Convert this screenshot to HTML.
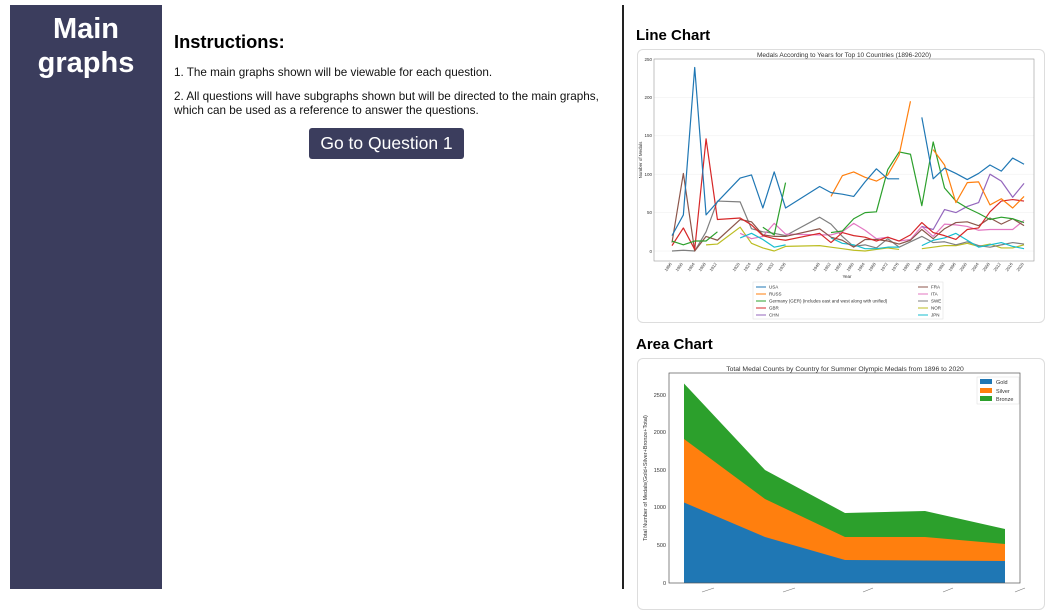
<!DOCTYPE html>
<html><head><meta charset="utf-8"><style>
html,body{margin:0;padding:0;width:1048px;height:595px;overflow:hidden;background:#fff;font-family:"Liberation Sans",sans-serif;}
.side{position:absolute;left:10px;top:5px;width:152px;height:584px;background:#3b3d5d;color:#fff;text-align:center;font-weight:bold;font-size:29px;line-height:34px;padding-top:7px;box-sizing:border-box;}
.vline{position:absolute;left:622px;top:5px;width:2px;height:584px;background:#222;}
h2{position:absolute;margin:0;font-size:18.3px;font-weight:bold;}
p{position:absolute;margin:0;font-size:11.7px;line-height:14px;color:#111;}
.btn{position:absolute;left:309px;top:128px;width:155px;height:31px;background:#3b3d5d;border-radius:3px;color:#fff;font-size:17.5px;text-align:center;line-height:31px;}
h3{position:absolute;margin:0;font-size:15px;font-weight:bold;}
.card{position:absolute;border:1px solid #ddd;border-radius:6px;background:#fff;}
svg{position:absolute;left:0;top:0;}
</style></head><body>
<div class="side">Main<br>graphs</div>
<div class="vline"></div>
<h2 style="left:174px;top:31px">Instructions:</h2>
<p style="left:174px;top:66px">1. The main graphs shown will be viewable for each question.</p>
<p style="left:174px;top:90px">2. All questions will have subgraphs shown but will be directed to the main graphs,<br>which can be used as a reference to answer the questions.</p>
<div class="btn">Go to Question 1</div>
<h3 style="left:636px;top:27px">Line Chart</h3>
<h3 style="left:636px;top:336px">Area Chart</h3>
<div class="card" style="left:637px;top:49px;width:406px;height:272px"></div>
<div class="card" style="left:637px;top:358px;width:406px;height:250px"></div>
<svg width="1048" height="595" font-family="Liberation Sans, sans-serif">
<g stroke="#eee" stroke-width="0.5">
<line x1="654" y1="251" x2="1034" y2="251"/><line x1="654" y1="212.6" x2="1034" y2="212.6"/><line x1="654" y1="174.2" x2="1034" y2="174.2"/><line x1="654" y1="135.8" x2="1034" y2="135.8"/><line x1="654" y1="97.4" x2="1034" y2="97.4"/><line x1="654" y1="59" x2="1034" y2="59"/>
</g>
<rect x="654" y="59" width="380" height="202" fill="none" stroke="#999" stroke-width="0.6"/>
<text x="844" y="57" font-size="6.5" text-anchor="middle" fill="#333">Medals According to Years for Top 10 Countries (1896-2020)</text>
<g font-size="4.5" fill="#333" text-anchor="end">
<text x="652" y="253">0</text><text x="652" y="214">50</text><text x="652" y="176">100</text><text x="652" y="137">150</text><text x="652" y="99">200</text><text x="652" y="61">250</text>
</g>
<text x="642" y="160" font-size="4.5" fill="#333" transform="rotate(-90 642 160)" text-anchor="middle">Number of Medals</text>
<text x="847" y="278" font-size="4.5" fill="#333" text-anchor="middle">Year</text>
<g font-size="4.2" fill="#333">
<text transform="translate(672,264) rotate(-55)" text-anchor="end">1896</text><text transform="translate(683,264) rotate(-55)" text-anchor="end">1900</text><text transform="translate(695,264) rotate(-55)" text-anchor="end">1904</text><text transform="translate(706,264) rotate(-55)" text-anchor="end">1908</text><text transform="translate(717,264) rotate(-55)" text-anchor="end">1912</text><text transform="translate(740,264) rotate(-55)" text-anchor="end">1920</text><text transform="translate(751,264) rotate(-55)" text-anchor="end">1924</text><text transform="translate(763,264) rotate(-55)" text-anchor="end">1928</text><text transform="translate(774,264) rotate(-55)" text-anchor="end">1932</text><text transform="translate(786,264) rotate(-55)" text-anchor="end">1936</text><text transform="translate(820,264) rotate(-55)" text-anchor="end">1948</text><text transform="translate(831,264) rotate(-55)" text-anchor="end">1952</text><text transform="translate(842,264) rotate(-55)" text-anchor="end">1956</text><text transform="translate(854,264) rotate(-55)" text-anchor="end">1960</text><text transform="translate(865,264) rotate(-55)" text-anchor="end">1964</text><text transform="translate(876,264) rotate(-55)" text-anchor="end">1968</text><text transform="translate(888,264) rotate(-55)" text-anchor="end">1972</text><text transform="translate(899,264) rotate(-55)" text-anchor="end">1976</text><text transform="translate(910,264) rotate(-55)" text-anchor="end">1980</text><text transform="translate(922,264) rotate(-55)" text-anchor="end">1984</text><text transform="translate(933,264) rotate(-55)" text-anchor="end">1988</text><text transform="translate(945,264) rotate(-55)" text-anchor="end">1992</text><text transform="translate(956,264) rotate(-55)" text-anchor="end">1996</text><text transform="translate(967,264) rotate(-55)" text-anchor="end">2000</text><text transform="translate(979,264) rotate(-55)" text-anchor="end">2004</text><text transform="translate(990,264) rotate(-55)" text-anchor="end">2008</text><text transform="translate(1001,264) rotate(-55)" text-anchor="end">2012</text><text transform="translate(1013,264) rotate(-55)" text-anchor="end">2016</text><text transform="translate(1024,264) rotate(-55)" text-anchor="end">2020</text>
</g>
<g transform="translate(672,251) scale(2.839,-0.768)" fill="none" stroke-width="1.2" stroke-linejoin="round">
<polyline vector-effect="non-scaling-stroke" stroke="#bcbd22" points="12,8 16,9 24,31 28,10 32,4 36,0 40,6 52,7 56,5 60,3 64,1 68,0 72,2 76,4 80,2"/>
<polyline vector-effect="non-scaling-stroke" stroke="#bcbd22" points="88,3 92,5 96,7 100,7 104,10 108,6 112,9 116,4 120,4 124,8"/>
<polyline vector-effect="non-scaling-stroke" stroke="#7f7f7f" points="0,0 4,1 8,0 12,25 16,65 24,64 28,29 32,25 36,23 40,20 52,44 56,35 60,19 64,6 68,8 72,4 76,16 80,5 84,12 88,19 92,11 96,12 100,8 104,12 108,7 112,5 116,8 120,11 124,9"/>
<polyline vector-effect="non-scaling-stroke" stroke="#e377c2" points="24,23 28,16 32,19 36,36 40,22 52,21 56,21 60,25 64,36 68,27 72,16 76,18 80,13 84,15 88,32 92,19 96,35 100,34 104,32 108,27 112,28 116,28 120,28 124,40"/>
<polyline vector-effect="non-scaling-stroke" stroke="#17becf" points="24,17 28,23 32,15 36,5 40,8"/>
<polyline vector-effect="non-scaling-stroke" stroke="#17becf" points="56,17 60,10 64,8 68,3 72,3 76,5 80,5"/>
<polyline vector-effect="non-scaling-stroke" stroke="#17becf" points="88,7 92,14 96,17 100,23 104,14 108,5 112,8 116,11 120,6 124,3"/>
<polyline vector-effect="non-scaling-stroke" stroke="#8c564b" points="0,11 4,101 8,0 12,19 16,14 24,41 28,38 32,21 36,19 40,19 52,29 56,18 60,14 64,5 68,15 72,15 76,13 80,9 84,14 88,28 92,16 96,29 100,37 104,38 108,33 112,43 116,35 120,42 124,33"/>
<polyline vector-effect="non-scaling-stroke" stroke="#9467bd" points="88,32 92,28 96,54 100,50 104,58 108,63 112,100 116,91 120,70 124,88"/>
<polyline vector-effect="non-scaling-stroke" stroke="#d62728" points="0,7 4,30 8,2 12,146 16,41 24,43 28,34 32,20 36,16 40,14 52,23 56,11 60,24 64,20 68,18 72,13 76,18 80,13 84,21 88,37 92,24 96,20 100,15 104,28 108,30 112,51 116,65 120,67 124,65"/>
<polyline vector-effect="non-scaling-stroke" stroke="#2ca02c" points="0,13 4,8 8,13 12,13 16,25"/>
<polyline vector-effect="non-scaling-stroke" stroke="#2ca02c" points="32,31 36,21 40,89"/>
<polyline vector-effect="non-scaling-stroke" stroke="#2ca02c" points="56,24 60,26 64,42 68,50 72,51 76,106 80,129 84,126 88,59 92,142 96,82 100,65 104,56 108,49 112,41 116,44 120,42 124,37"/>
<polyline vector-effect="non-scaling-stroke" stroke="#ff7f0e" points="56,71 60,98 64,103 68,96 72,91 76,99 80,125 84,195"/>
<polyline vector-effect="non-scaling-stroke" stroke="#ff7f0e" points="92,132 96,112 100,63 104,89 108,90 112,60 116,68 120,56 124,71"/>
<polyline vector-effect="non-scaling-stroke" stroke="#1f77b4" points="0,20 4,47 8,239 12,47 16,64 24,95 28,99 32,56 36,103 40,56 52,84 56,76 60,74 64,71 68,90 72,107 76,94 80,94"/>
<polyline vector-effect="non-scaling-stroke" stroke="#1f77b4" points="88,174 92,94 96,108 100,101 104,93 108,101 112,112 116,104 120,121 124,113"/>
</g>
<rect x="753" y="282" width="190" height="37" fill="#fff" stroke="#ddd" stroke-width="0.5"/>
<g font-size="4.5" fill="#333" stroke-width="1">
<line x1="756" y1="287" x2="766" y2="287" stroke="#1f77b4"/><text x="769" y="288.5">USA</text>
<line x1="756" y1="294" x2="766" y2="294" stroke="#ff7f0e"/><text x="769" y="295.5">RUSS</text>
<line x1="756" y1="301" x2="766" y2="301" stroke="#2ca02c"/><text x="769" y="302.5">Germany (GER) (includes east and west along with unified)</text>
<line x1="756" y1="308" x2="766" y2="308" stroke="#d62728"/><text x="769" y="309.5">GBR</text>
<line x1="756" y1="315" x2="766" y2="315" stroke="#9467bd"/><text x="769" y="316.5">CHN</text>
<line x1="918" y1="287" x2="928" y2="287" stroke="#8c564b"/><text x="931" y="288.5">FRA</text>
<line x1="918" y1="294" x2="928" y2="294" stroke="#e377c2"/><text x="931" y="295.5">ITA</text>
<line x1="918" y1="301" x2="928" y2="301" stroke="#7f7f7f"/><text x="931" y="302.5">SWE</text>
<line x1="918" y1="308" x2="928" y2="308" stroke="#bcbd22"/><text x="931" y="309.5">NOR</text>
<line x1="918" y1="315" x2="928" y2="315" stroke="#17becf"/><text x="931" y="316.5">JPN</text>
</g>
<text x="845" y="371" font-size="6.8" text-anchor="middle" fill="#333">Total Medal Counts by Country for Summer Olympic Medals from 1896 to 2020</text>
<polygon fill="#2ca02c" points="684,383.5 765,470 845,513 925,511 1005,529 1005,583 684,583"/>
<polygon fill="#ff7f0e" points="684,439 765,499 845,537 925,537 1005,544 1005,583 684,583"/>
<polygon fill="#1f77b4" points="684,502.5 765,537 845,560 925,560.5 1005,561 1005,583 684,583"/>
<rect x="669" y="373" width="351" height="210" fill="none" stroke="#555" stroke-width="0.7"/>
<g font-size="5.5" fill="#333" text-anchor="end">
<text x="666" y="585">0</text><text x="666" y="547">500</text><text x="666" y="509">1000</text><text x="666" y="472">1500</text><text x="666" y="434">2000</text><text x="666" y="397">2500</text>
</g>
<text x="647" y="478" font-size="5.5" fill="#333" transform="rotate(-90 647 478)" text-anchor="middle">Total Number of Medals(Gold+Silver+Bronze+Total)</text>
<rect x="977" y="377" width="42" height="27" fill="#fff" stroke="#ddd" stroke-width="0.5"/>
<g font-size="5.5" fill="#333">
<rect x="980" y="379" width="12" height="5" fill="#1f77b4"/><text x="996" y="384">Gold</text>
<rect x="980" y="388" width="12" height="5" fill="#ff7f0e"/><text x="996" y="393">Silver</text>
<rect x="980" y="396" width="12" height="5" fill="#2ca02c"/><text x="996" y="401">Bronze</text>
</g>
<g stroke="#777" stroke-width="0.6"><line x1="702" y1="592" x2="714" y2="588"/><line x1="783" y1="592" x2="795" y2="588"/><line x1="863" y1="592" x2="873" y2="588"/><line x1="943" y1="592" x2="953" y2="588"/><line x1="1015" y1="592" x2="1025" y2="588"/></g>
</svg>
</body></html>
